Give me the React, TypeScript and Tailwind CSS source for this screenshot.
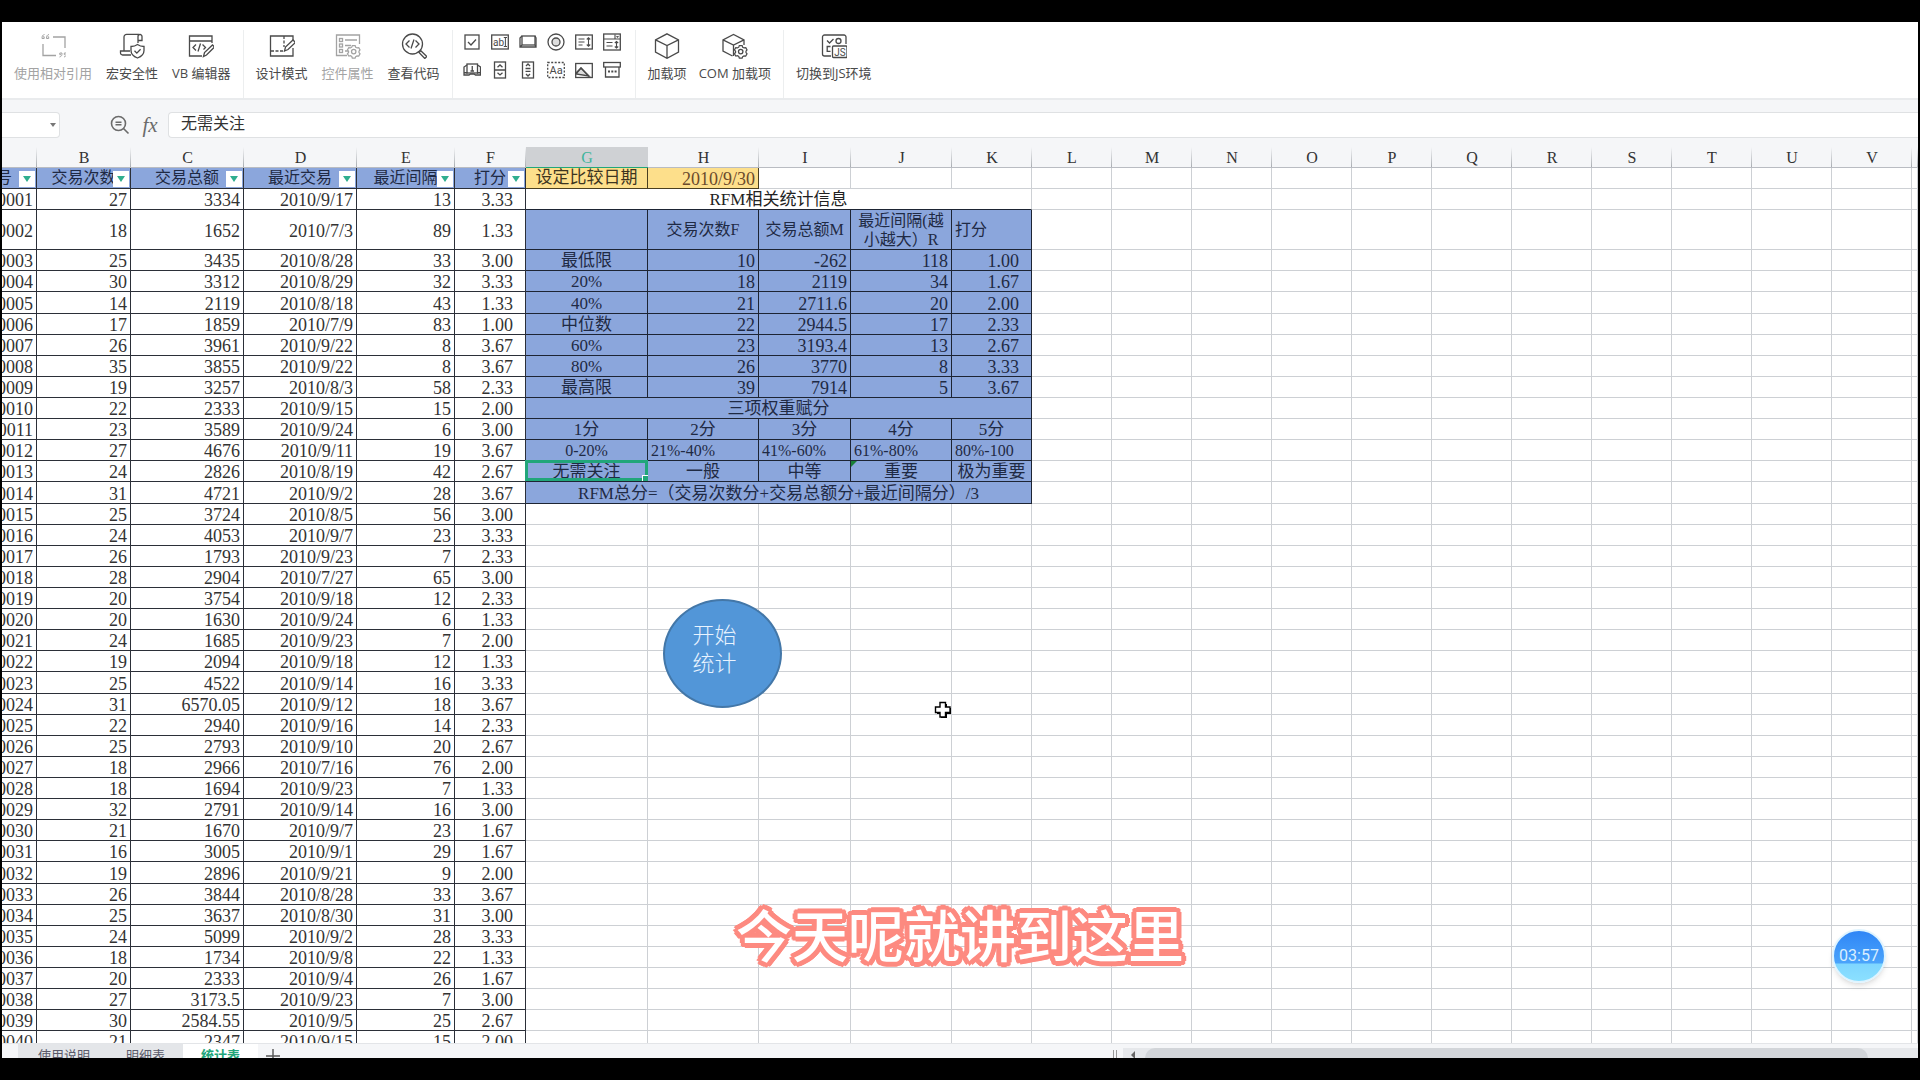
import type { ReactNode } from 'react';

type Cell = {
  text?: string;
  span?: number;
  className?: string;
  selected?: boolean;
  flagged?: boolean;
};

// 编号, 交易次数, 交易总额, 最近交易, 最近间隔, 打分
const records: string[][] = [
  ['0001', '27', '3334', '2010/9/17', '13', '3.33'],
  ['0002', '18', '1652', '2010/7/3', '89', '1.33'],
  ['0003', '25', '3435', '2010/8/28', '33', '3.00'],
  ['0004', '30', '3312', '2010/8/29', '32', '3.33'],
  ['0005', '14', '2119', '2010/8/18', '43', '1.33'],
  ['0006', '17', '1859', '2010/7/9', '83', '1.00'],
  ['0007', '26', '3961', '2010/9/22', '8', '3.67'],
  ['0008', '35', '3855', '2010/9/22', '8', '3.67'],
  ['0009', '19', '3257', '2010/8/3', '58', '2.33'],
  ['0010', '22', '2333', '2010/9/15', '15', '2.00'],
  ['0011', '23', '3589', '2010/9/24', '6', '3.00'],
  ['0012', '27', '4676', '2010/9/11', '19', '3.67'],
  ['0013', '24', '2826', '2010/8/19', '42', '2.67'],
  ['0014', '31', '4721', '2010/9/2', '28', '3.67'],
  ['0015', '25', '3724', '2010/8/5', '56', '3.00'],
  ['0016', '24', '4053', '2010/9/7', '23', '3.33'],
  ['0017', '26', '1793', '2010/9/23', '7', '2.33'],
  ['0018', '28', '2904', '2010/7/27', '65', '3.00'],
  ['0019', '20', '3754', '2010/9/18', '12', '2.33'],
  ['0020', '20', '1630', '2010/9/24', '6', '1.33'],
  ['0021', '24', '1685', '2010/9/23', '7', '2.00'],
  ['0022', '19', '2094', '2010/9/18', '12', '1.33'],
  ['0023', '25', '4522', '2010/9/14', '16', '3.33'],
  ['0024', '31', '6570.05', '2010/9/12', '18', '3.67'],
  ['0025', '22', '2940', '2010/9/16', '14', '2.33'],
  ['0026', '25', '2793', '2010/9/10', '20', '2.67'],
  ['0027', '18', '2966', '2010/7/16', '76', '2.00'],
  ['0028', '18', '1694', '2010/9/23', '7', '1.33'],
  ['0029', '32', '2791', '2010/9/14', '16', '3.00'],
  ['0030', '21', '1670', '2010/9/7', '23', '1.67'],
  ['0031', '16', '3005', '2010/9/1', '29', '1.67'],
  ['0032', '19', '2896', '2010/9/21', '9', '2.00'],
  ['0033', '26', '3844', '2010/8/28', '33', '3.67'],
  ['0034', '25', '3637', '2010/8/30', '31', '3.00'],
  ['0035', '24', '5099', '2010/9/2', '28', '3.33'],
  ['0036', '18', '1734', '2010/9/8', '22', '1.33'],
  ['0037', '20', '2333', '2010/9/4', '26', '1.67'],
  ['0038', '27', '3173.5', '2010/9/23', '7', '3.00'],
  ['0039', '30', '2584.55', '2010/9/5', '25', '2.67'],
  ['0040', '21', '2347', '2010/9/15', '15', '2.00'],
];

const columns = [
  { name: '', width: 'w-[35px]' },
  { name: 'B', width: 'w-[94px]' },
  { name: 'C', width: 'w-[113px]' },
  { name: 'D', width: 'w-[113px]' },
  { name: 'E', width: 'w-[98px]' },
  { name: 'F', width: 'w-[71px]' },
  { name: 'G', width: 'w-[122px]' },
  { name: 'H', width: 'w-[111px]' },
  { name: 'I', width: 'w-[92px]' },
  { name: 'J', width: 'w-[101px]' },
  { name: 'K', width: 'w-[80px]' },
  ...'LMNOPQRSTUV'.split('').map((name) => ({ name, width: 'w-[80px]' })),
  { name: '', width: '' },
];

const BLUE = 'bg-[#8ba6dc] border-[#1d2433] text-[#1f2a44]';
const num = `${BLUE} text-right pr-[3px] text-[18px]`;
const score = `${BLUE} text-right pr-3 text-[18px]`;
const mid = `${BLUE} text-center text-[17px]`;
const head = `${BLUE} text-center text-[16px]`;
const left = `${BLUE} text-left pl-[3px] text-[16px]`;

const stat = (label: string, f: string, m: string, r: string, s: string): Cell[] => [
  { text: label, className: mid },
  { text: f, className: num },
  { text: m, className: num },
  { text: r, className: num },
  { text: s, className: score },
];

const summary: Cell[][] = [
  [{ text: 'RFM相关统计信息', span: 5, className: 'text-center text-[17px] text-[#222] border-r-[#cdd0d4] border-b-[#1d2433]' }],
  [
    { className: mid },
    { text: '交易次数F', className: head },
    { text: '交易总额M', className: head },
    { text: '最近间隔(越小越大）R', className: `${head} whitespace-normal leading-[19px]` },
    { text: '打分', className: left },
  ],
  stat('最低限', '10', '-262', '118', '1.00'),
  stat('20%', '18', '2119', '34', '1.67'),
  stat('40%', '21', '2711.6', '20', '2.00'),
  stat('中位数', '22', '2944.5', '17', '2.33'),
  stat('60%', '23', '3193.4', '13', '2.67'),
  stat('80%', '26', '3770', '8', '3.33'),
  stat('最高限', '39', '7914', '5', '3.67'),
  [{ text: '三项权重赋分', span: 5, className: mid }],
  ['1分', '2分', '3分', '4分', '5分'].map((text) => ({ text, className: mid })),
  [
    { text: '0-20%', className: head },
    { text: '21%-40%', className: left },
    { text: '41%-60%', className: left },
    { text: '61%-80%', className: left },
    { text: '80%-100', className: left },
  ],
  [
    { text: '无需关注', className: mid, selected: true },
    { text: '一般', className: mid },
    { text: '中等', className: mid },
    { text: '重要', className: mid, flagged: true },
    { text: '极为重要', className: mid },
  ],
  [{ text: 'RFM总分=（交易次数分+交易总额分+最近间隔分）/3', span: 5, className: mid }],
];

const rowHeight = (index: number) => {
  if (index === 1) return 'h-10';
  return index % 9 === 4 ? 'h-[22px]' : 'h-[21px]';
};

const Icon = ({ children, size = 'size-[26px]', box = '0 0 26 26' }: { children: ReactNode; size?: string; box?: string }) => (
  <svg viewBox={box} className={size} fill="none" stroke="currentColor" strokeWidth="1.3" aria-hidden="true">
    {children}
  </svg>
);

const Gear = () => (
  <>
    <path
      fill="#fff"
      d="M18 13.2h3l.6 1.7 1.5.8 1.8-.3 1.3 2.3-1.1 1.5v1.4l1.1 1.4-1.4 2.4-1.8-.3-1.4.8-.6 1.5h-3l-.6-1.6-1.4-.8-1.7.3-1.5-2.3 1.2-1.5v-1.4l-1.2-1.4 1.4-2.3 1.8.3 1.4-.8z"
      transform="translate(.4 .2) scale(.94)"
    />
    <circle cx="18.7" cy="18.6" r="2.2" />
  </>
);

const RibbonButton = ({ label, muted, children }: { label: string; muted?: boolean; children: ReactNode }) => (
  <button
    type="button"
    disabled={muted}
    className={`flex flex-col items-center gap-1.5 ${muted ? 'text-[#a3a3a3]' : 'text-[#4a4a4a]'}`}
  >
    <Icon>{children}</Icon>
    <span className="text-[13px] leading-4 whitespace-nowrap">{label}</span>
  </button>
);

const formControls: { label: string; icon: ReactNode }[] = [
  { label: '复选框', icon: <><rect x="2" y="2" width="14" height="14" /><path d="M5 9l3 3 5-5.500" /></> },
  {
    label: '文本框',
    icon: (
      <>
        <rect x=".7" y="2" width="16.600" height="14" />
        <text x="2" y="12.800" fontSize="10" fill="currentColor" stroke="none" fontFamily="Roboto">ab</text>
        <path d="M12.800 4.500h3.200M14.400 4.500v9M12.800 13.500h3.200" strokeWidth="1" />
      </>
    ),
  },
  { label: '命令按钮', icon: <><rect x="3" y="3" width="13" height="9" /><path d="M3 3L1 5v9h16v-9l-1-2M1 14l2-2M17 14l-1-2" /></> },
  { label: '选项按钮', icon: <><circle cx="9" cy="9" r="8" /><circle cx="9" cy="9" r="4" fill="#ddd" /></> },
  { label: '列表框', icon: <><rect x=".7" y="2" width="16.600" height="14" /><path d="M3.500 6h6M3.500 9h6M3.500 12h4M13.500 5v8M11.800 6.500l1.700-1.800 1.700 1.800M11.800 11.500l1.700 1.800 1.700-1.800" strokeWidth="1.1" /></> },
  { label: '组合框', icon: <><rect x=".7" y="1" width="16.600" height="16" /><path d="M1 6h16M12 1.500V6M3.500 9.500h6M3.500 13h6M13.500 8.500v6.500M11.800 10l1.700-1.500 1.700 1.500M11.800 13.500l1.700 1.500 1.700-1.500M13.500 3.200l1 1 1-1" strokeWidth="1.1" /></> },
  { label: '切换按钮', icon: <><rect x="4" y="3" width="10.500" height="9" /><path d="M9.250 5v5M7.500 10h3.500M4 4L1 6v8h5l1.500-1h3.500l1.500 1H17.500V6l-3-2M1.500 11.500l3 .5M17 11.500l-3 .5" /></> },
  { label: '数值调节钮', icon: <><rect x="3.500" y="1" width="11" height="16" /><path d="M3.500 9h11M6.500 6.300L9 4l2.500 2.300M6.500 11.800L9 14l2.500-2.200" /></> },
  { label: '滚动条', icon: <><rect x="3.500" y="1" width="11" height="16" /><path d="M7 5l2-2 2 2M7 13l2 2 2-2M6.500 7.500h5M6.500 10.300h5" /></> },
  {
    label: '标签',
    icon: (
      <>
        <rect x=".7" y="1.500" width="16.600" height="15" strokeDasharray="2 1.500" />
        <text x="2.500" y="13" fontSize="11" fill="currentColor" stroke="none" fontFamily="Roboto">Aa</text>
      </>
    ),
  },
  { label: '图像', icon: <><path d="M1 13l5-6 8 8z" fill="#ddd" /><rect x=".7" y="2.500" width="16.600" height="14" /><path d="M1 12l5-5 8 8.500" /></> },
  { label: '其他控件', icon: <><rect x=".7" y="1.500" width="16.600" height="4.500" /><path d="M2.500 6v10h13.500V6" /><path d="M5 10.500h2M8.300 10.500h2M11.600 10.500h2" strokeWidth="1.800" /></> },
];

const Ribbon = () => (
  <header className="flex h-[76px] shrink-0 bg-white pt-2">
    <div className="flex gap-3.5 border-r border-[#eceeef] px-3 pt-[3px]">
      <RibbonButton label="使用相对引用" muted>
        <path d="M13 4h12v11M3 11v11.500h13" />
        <path d="M4.500 1.500C2.500 2 2 3 2 5.500h2.200V3.800H3M9 1.500C7 2 6.500 3 6.500 5.500h2.200V3.800H7.500M19.500 24c2-.5 2.500-1.500 2.500-4h-2.200v1.700H21M24 24c2-.5 2.500-1.500 2.500-4h-2.200v1.700h1.200" strokeWidth="1" />
      </RibbonButton>
      <RibbonButton label="宏安全性">
        <path d="M12 22H3.500a2 2 0 0 1-2-2v-2H5V4a2.600 2.600 0 0 1 2.600-2.600H20M19 7.500h4V3.500a2 2 0 0 0-4 0V10M1.500 18H11" />
        <path d="M18.500 11.500c2 1.500 4 2 6.500 2v4c0 3.500-2.500 6-6.500 7.500-4-1.500-6.500-4-6.500-7.500v-4c2.500 0 4.500-.5 6.500-2z" fill="#fff" />
        <path d="M15.500 17.800l2.300 2.300 3.800-3.900" />
      </RibbonButton>
      <RibbonButton label="VB 编辑器">
        <path d="M24 10V3H1.500v20H14M1.500 8H24" />
        <path d="M8 11.500l-3 3 3 3M14.500 11.500l3 3-2 2M12.500 10.500l-2.500 8" />
        <path d="M15.500 23.500l1-4 8-7.500 2 2-8 8z" fill="#fff" />
      </RibbonButton>
    </div>
    <div className="flex gap-3.5 border-r border-[#eceeef] px-3 pt-[3px]">
      <RibbonButton label="设计模式">
        <path d="M24 8V3H1.500v20H24v-8" />
        <path d="M15 3v11M2 18h14" strokeDasharray="3 1.500" />
        <path d="M15.500 18l1-4 7.500-7 2.500 2.500-7.500 7z" fill="#fff" />
      </RibbonButton>
      <RibbonButton label="控件属性" muted>
        <path d="M24.500 11V2H1.500v20.500H12M10 7h12M10 12.500h6M10 18h3" />
        <rect x="4.500" y="5.500" width="3" height="3" />
        <rect x="4.500" y="11" width="3" height="3" />
        <rect x="4.500" y="16.500" width="3" height="3" />
        <Gear />
      </RibbonButton>
      <RibbonButton label="查看代码">
        <circle cx="11.500" cy="11" r="10" />
        <path d="M8.500 7.500L5 11l3.500 3.500M14.500 7.500L18 11l-3.500 3.500M13 6.500l-3 9" />
        <path d="M18 19.500l1.800-1.800 6 5.800-2 2z" fill="#fff" />
      </RibbonButton>
    </div>
    <div className="grid grid-cols-6 content-start gap-2.5 border-r border-[#eceeef] pt-[3px] pr-3.5 pl-2.5 text-[#4a4a4a]">
      {formControls.map((control) => (
        <button key={control.label} type="button" aria-label={control.label}>
          <Icon size="size-[18px]" box="0 0 18 18">{control.icon}</Icon>
        </button>
      ))}
    </div>
    <div className="flex gap-3 border-r border-[#eceeef] px-3 pt-[3px]">
      <RibbonButton label="加载项">
        <path d="M13 .8l11.500 6V19L13 25.300 1.500 19V6.800zM1.500 6.800L13 12.500l11.500-5.700M13 12.500v12.800" />
      </RibbonButton>
      <RibbonButton label="COM 加载项">
        <path d="M10.500 23L1 18V6.800L11.500 1.500 22 6.800V12M1 6.800L11.500 12 22 6.800M11.500 12v11" />
        <Gear />
      </RibbonButton>
    </div>
    <div className="flex px-3 pt-[3px]">
      <RibbonButton label="切换到JS环境">
        <path d="M25 11V4a2 2 0 0 0-2-2H3.500a2 2 0 0 0-2 2v17a2 2 0 0 0 2 2H10M6 7.500l2.500 2.500 4-4M9.500 13.500H6.200v4.800h3.300" />
        <circle cx="17.500" cy="8" r="2.500" />
        <rect x="11.500" y="13" width="14.500" height="11.500" rx="1" fill="#fff" />
        <text x="13.300" y="22.500" fontSize="10" fill="currentColor" stroke="none" fontFamily="Roboto">JS</text>
      </RibbonButton>
    </div>
  </header>
);

const FormulaBar = () => (
  <div className="flex h-[49px] shrink-0 border-t-2 border-[#e9ebed] bg-[#f5f6f8] pt-3 pb-[9px]">
    <button type="button" aria-label="名称框" className="flex w-[58px] items-center justify-end rounded-r border border-l-0 border-[#dfe1e3] bg-white pr-[3px]">
      <svg viewBox="0 0 6 4" className="h-1 w-1.5" fill="#777" aria-hidden="true"><path d="M0 0h6L3 4z" /></svg>
    </button>
    <div className="flex flex-1 items-center pl-[50px] text-[#6b6b6b]">
      <button type="button" aria-label="缩小">
        <svg viewBox="0 0 20 20" className="size-5" fill="none" stroke="currentColor" strokeWidth="1.600" aria-hidden="true">
          <circle cx="8.500" cy="8.500" r="7" />
          <path d="M13.500 13.500l5 5M5.500 7.300h6M5.500 9.800h6" />
        </svg>
      </button>
      <button type="button" aria-label="插入函数" className="w-9 pl-1 text-center font-['Liberation_Serif',serif] text-[21px] leading-5 italic">
        fx
      </button>
      <input
        aria-label="编辑栏"
        defaultValue="无需关注"
        className="ml-0.5 h-full min-w-0 flex-1 rounded-l border border-r-0 border-[#dfe1e3] bg-white pb-1.5 pl-3 text-base leading-4 text-[#333] outline-none"
      />
    </div>
  </div>
);

const FilterButton = ({ label }: { label: string }) => (
  <button type="button" aria-label={`筛选${label}`} className="absolute right-px bottom-px flex size-4 items-center justify-center bg-white">
    <svg viewBox="0 0 8 6" className="h-1.5 w-2" fill="#2fae8f" aria-hidden="true"><path d="M0 0h8L4 6z" /></svg>
  </button>
);

const Blank = ({ count }: { count: number }) => (
  <>
    {Array.from({ length: count }, (_, i) => (
      <td key={i} className="border-r border-b border-[#cdd0d4] p-0" />
    ))}
  </>
);

const Sheet = () => (
  <table className="w-full table-fixed border-separate border-spacing-0 font-['Liberation_Serif','Noto_Sans_CJK_SC',serif] leading-[18px] whitespace-nowrap">
    <colgroup>
      {columns.map((column, i) => (
        <col key={i} className={column.width} />
      ))}
    </colgroup>
    <thead>
      <tr className="h-[21px]">
        {columns.map((column, i) => (
          <th
            key={i}
            scope="col"
            className={`border-b p-0 pt-[2px] text-[16px] font-normal ${
              column.name === 'G'
                ? 'border-[#21a67a] bg-[#cfd1d4] text-[#3fb59c]'
                : 'border-[#b9bcc2] bg-linear-to-t from-[#a9adb2] to-transparent bg-[length:1px_100%] bg-right bg-no-repeat text-[#333]'
            }`}
          >
            {column.name}
          </th>
        ))}
      </tr>
    </thead>
    <tbody>
      <tr className="h-[21px]">
        <td className="relative border-r border-b border-[#2b2f38] bg-[#8ba6dc] p-0 text-[16px] text-[#1f2a44]">
          <div className="flex justify-end pr-6">号</div>
          <FilterButton label="编号" />
        </td>
        {['交易次数', '交易总额', '最近交易', '最近间隔', '打分'].map((text) => (
          <td key={text} className="relative border-r border-b border-[#2b2f38] bg-[#8ba6dc] p-0 text-center text-[16px] text-[#1f2a44]">
            {text}
            <FilterButton label={text} />
          </td>
        ))}
        <td className="border-r border-b border-[#4a3f20] bg-[#fddf8b] p-0 text-center text-[17px] text-[#3d351f]">设定比较日期</td>
        <td className="border-r border-b border-[#4a3f20] bg-[#fddf8b] p-0 pt-[2px] pr-[3px] text-right text-[18px] text-[#6b4a2b]">2010/9/30</td>
        <Blank count={15} />
      </tr>
      {records.map((record, row) => {
        const cells = summary[row];
        return (
          <tr key={record[0]} className={rowHeight(row)}>
            {record.map((value, i) => (
              <td
                key={i}
                className={`border-r border-b border-[#2b2f38] p-0 pt-[2px] text-[18px] text-[#333] ${i === 5 ? 'pr-3' : 'pr-[3px]'}`}
              >
                <div className="flex justify-end">{value}</div>
              </td>
            ))}
            {cells ? (
              cells.map((cell, i) => (
                <td
                  key={i}
                  colSpan={cell.span}
                  className={`relative border-r border-b p-0 ${row === 1 ? '' : 'pt-[2px]'} ${cell.className}`}
                >
                  {cell.text}
                  {cell.selected && (
                    <span className="absolute -inset-x-px -top-px bottom-0 border-[3px] border-[#21a67a]">
                      <span className="absolute -right-[3px] -bottom-[3px] size-1.5 border-t border-l border-white bg-[#21a67a]" />
                    </span>
                  )}
                  {cell.flagged && (
                    <svg viewBox="0 0 6 6" className="absolute top-0 left-0 size-1.5" fill="#1a7f37" aria-hidden="true"><path d="M0 0h6L0 6z" /></svg>
                  )}
                </td>
              ))
            ) : (
              <Blank count={5} />
            )}
            <Blank count={12} />
          </tr>
        );
      })}
    </tbody>
  </table>
);

const SheetTabs = () => (
  <footer className="flex h-[15px] shrink-0 overflow-hidden border-t border-[#e3e5e8] bg-[#f5f6f8] text-[13px] leading-[22px] text-[#5a5a6a]">
    <nav aria-label="工作表" className="flex h-6 flex-1 pl-4">
      <a href="#usage" className="bg-[#e4e6e9] pr-[18px] pl-5">使用说明</a>
      <a href="#detail" className="bg-[#e4e6e9] px-[18px]">明细表</a>
      <a href="#stats" className="bg-white px-[18px] font-bold text-[#21a67a]">统计表</a>
      <button type="button" aria-label="新建工作表" className="ml-1 p-1 text-[#555]">
        <svg viewBox="0 0 14 14" className="size-3.5" stroke="currentColor" strokeWidth="1.400" aria-hidden="true"><path d="M7 0v14M0 7h14" /></svg>
      </button>
    </nav>
    <div className="flex h-6 w-[42%] items-start pt-1">
      <span className="mt-0.5 h-5 w-1 border-x border-[#999]" />
      <div className="ml-1.5 flex h-5 flex-1 items-center bg-[#e6e8eb] pr-[50px] pl-2">
        <svg viewBox="0 0 4 8" className="mb-1.5 h-2 w-1" fill="#666" aria-hidden="true"><path d="M4 0v8L0 4z" /></svg>
        <span className="ml-2.5 h-full flex-1 rounded-full bg-[#d2d5d9]" />
      </div>
    </div>
  </footer>
);

export default function App() {
  return (
    <div className="h-screen bg-black px-0.5 py-[22px] font-['Open_Sans','Noto_Sans_CJK_SC',sans-serif]">
      <div className="relative flex h-full flex-col overflow-hidden bg-white">
        <Ribbon />
        <FormulaBar />
        <main className="relative min-h-0 flex-1 overflow-hidden bg-[linear-gradient(#f5f6f8_21px,#fff_21px)]">
          <Sheet />
          {/* Macro button drawn on the sheet */}
          <button
            type="button"
            className="absolute top-[452px] left-[661px] h-[109px] w-[119px] rounded-[50%] border-2 border-[#4377a8] bg-[#5296d8] pr-4 pb-3 text-[22px] leading-7 font-light text-[#e8f3ff]"
          >
            开始
            <br />
            统计
          </button>
          <svg viewBox="0 0 18 18" className="absolute top-[554px] left-[932px] size-[18px]" aria-hidden="true">
            <path d="M7 3h6v4h4v6h-4v4H7v-4H3V7h4z" fill="#000" />
            <path d="M6 1.500h5.500V6H16v5.500h-4.500V16H6v-4.500H1.500V6H6z" fill="#fff" stroke="#000" strokeWidth="1.400" />
          </svg>
        </main>
        <SheetTabs />

        {/* Recording timer */}
        <div className="absolute right-8 bottom-[75px] flex size-[54px] items-center justify-center rounded-full border-2 border-[#dff4ff] bg-[linear-gradient(#2f86f6,#4aa3fb_64%,#7fd6ff_66%,#8be0ff)] font-['Roboto',sans-serif] text-base text-[#d9efff] shadow-md">
          03:57
        </div>

        {/* Subtitle */}
        <p className="absolute inset-x-0 bottom-[93px] text-center font-['Noto_Sans_CJK_SC',sans-serif] text-[56px] leading-[64px] font-medium text-white [text-shadow:5px_0_#fd8a80,-5px_0_#fd8a80,0_5px_#fd8a80,0_-5px_#fd8a80,4px_3px_#fd8a80,-4px_3px_#fd8a80,4px_-3px_#fd8a80,-4px_-3px_#fd8a80,3px_4px_#fd8a80,-3px_4px_#fd8a80,3px_-4px_#fd8a80,-3px_-4px_#fd8a80,2px_2px_#fd8a80,-2px_2px_#fd8a80,2px_-2px_#fd8a80,-2px_-2px_#fd8a80]">
          今天呢就讲到这里
        </p>
      </div>
    </div>
  );
}
